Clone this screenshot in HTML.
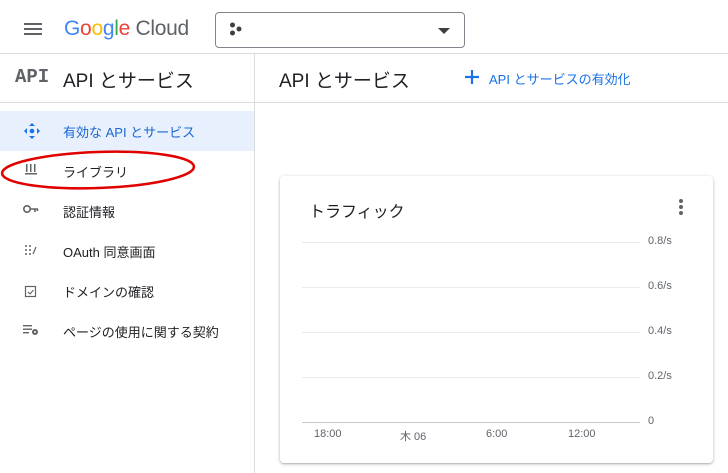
<!DOCTYPE html><html><head><meta charset="utf-8"><style>
*{margin:0;padding:0;box-sizing:border-box}
body{width:728px;height:473px;overflow:hidden;background:#fff;font-family:"Liberation Sans","Noto Sans CJK JP",sans-serif;color:#202124;position:relative}
.a{position:absolute}
.t{white-space:nowrap}
.nav{font-size:13px;color:#202124}
</style></head><body>
<div class="a" style="left:24px;top:23px;width:18px;height:2px;background:#5f6368;box-shadow:0 5px 0 #5f6368,0 10px 0 #5f6368"></div>
<div class="a t" style="left:64px;top:17px;font-size:21px;letter-spacing:-0.3px"><span style="color:#4285f4">G</span><span style="color:#ea4335">o</span><span style="color:#fbbc05">o</span><span style="color:#4285f4">g</span><span style="color:#34a853">l</span><span style="color:#ea4335">e</span> <span style="color:#5f6368">Cloud</span></div>
<div class="a" style="left:215px;top:12px;width:250px;height:36px;border:1px solid #80868b;border-radius:4px"></div>
<svg class="a" style="left:229px;top:22px" width="14" height="14"><circle cx="3.5" cy="3" r="2.5" fill="#3c4043"/><circle cx="10" cy="7" r="2.5" fill="#3c4043"/><circle cx="3.5" cy="11" r="2.5" fill="#3c4043"/></svg>
<div class="a" style="left:438px;top:28px;width:0;height:0;border-left:6px solid transparent;border-right:6px solid transparent;border-top:6px solid #3c4043"></div>
<div class="a" style="left:0;top:53px;width:728px;height:1px;background:#dadce0"></div>
<div class="a" style="left:0;top:102px;width:728px;height:1px;background:#dadce0"></div>
<div class="a" style="left:254px;top:54px;width:1px;height:419px;background:#dadce0"></div>
<div class="a t" style="left:15px;top:66px;font-family:'Liberation Mono',monospace;font-weight:bold;font-size:19px;color:#5f6368">API</div>
<div class="a t" style="left:63px;top:66px;font-size:19px">API とサービス</div>
<div class="a t" style="left:279px;top:66px;font-size:19px">API とサービス</div>
<svg class="a" style="left:464px;top:69px" width="16" height="16"><path d="M8 1v14M1 8h14" stroke="#1a73e8" stroke-width="2.2"/></svg>
<div class="a t" style="left:489px;top:69px;font-size:13px;color:#1a73e8">API とサービスの有効化</div>
<div class="a" style="left:0;top:111px;width:254px;height:40px;background:#e8f0fe"></div>
<svg class="a" style="left:23px;top:122px" width="18" height="18"><g fill="#1a73e8"><path d="M9 1l3 3H6z"/><path d="M9 17l3-3H6z"/><path d="M1 9l3-3v6z"/><path d="M17 9l-3-3v6z"/><circle cx="9" cy="9" r="2.3"/></g></svg>
<div class="a t nav" style="left:63px;top:122px;color:#1967d2">有効な API とサービス</div>
<svg class="a" style="left:24px;top:162px" width="14" height="14"><g fill="#5f6368"><rect x="1" y="11" width="12" height="1.5"/><rect x="2" y="2" width="1.5" height="8"/><rect x="6" y="2" width="1.5" height="8"/><rect x="10" y="2" width="1.5" height="8"/></g></svg>
<div class="a t nav" style="left:63px;top:162px">ライブラリ</div>
<svg class="a" style="left:22px;top:203px" width="18" height="12"><circle cx="5" cy="6" r="3.2" fill="none" stroke="#5f6368" stroke-width="1.6"/><path d="M8 6h8M13 6v3M15.5 6v2" stroke="#5f6368" stroke-width="1.6"/></svg>
<div class="a t nav" style="left:63px;top:202px">認証情報</div>
<svg class="a" style="left:24px;top:244px" width="14" height="12"><g fill="#5f6368"><circle cx="2" cy="2" r="1"/><circle cx="2" cy="6" r="1"/><circle cx="2" cy="10" r="1"/><circle cx="6" cy="2" r="1"/><circle cx="6" cy="6" r="1"/><circle cx="6" cy="10" r="1"/><path d="M9 10l3-7" stroke="#5f6368" stroke-width="1.2"/></g></svg>
<div class="a t nav" style="left:63px;top:242px">OAuth 同意画面</div>
<svg class="a" style="left:24px;top:284px" width="14" height="14"><rect x="1.5" y="2.5" width="10" height="10" fill="none" stroke="#5f6368" stroke-width="1.2"/><path d="M4 8l2 2 3.5-4" fill="none" stroke="#5f6368" stroke-width="1.1"/></svg>
<div class="a t nav" style="left:63px;top:282px">ドメインの確認</div>
<svg class="a" style="left:23px;top:323px" width="18" height="14"><g fill="#5f6368"><rect x="0" y="2" width="9" height="1.4"/><rect x="0" y="5.5" width="9" height="1.4"/><rect x="0" y="9" width="6" height="1.4"/><circle cx="12" cy="9" r="3"/></g><circle cx="12" cy="9" r="1" fill="#fff"/></svg>
<div class="a t nav" style="left:63px;top:322px">ページの使用に関する契約</div>
<svg class="a" style="left:0;top:148px" width="200" height="44"><ellipse cx="98" cy="22" rx="96" ry="18" fill="none" stroke="#e00000" stroke-width="2.5" transform="rotate(-2 98 22)"/></svg>
<div class="a" style="left:280px;top:176px;width:433px;height:287px;border-radius:4px;box-shadow:0 1px 3px rgba(60,64,67,.35),0 1px 1px rgba(60,64,67,.15)"></div>
<div class="a t" style="left:309px;top:198px;font-size:16px">トラフィック</div>
<svg class="a" style="left:677px;top:198px" width="8" height="18"><g fill="#5f6368"><circle cx="4" cy="3" r="2"/><circle cx="4" cy="9" r="2"/><circle cx="4" cy="15" r="2"/></g></svg>
<div class="a" style="left:302px;top:242px;width:338px;height:1px;background:#e8eaed"></div>
<div class="a" style="left:302px;top:287px;width:338px;height:1px;background:#e8eaed"></div>
<div class="a" style="left:302px;top:332px;width:338px;height:1px;background:#e8eaed"></div>
<div class="a" style="left:302px;top:377px;width:338px;height:1px;background:#e8eaed"></div>
<div class="a" style="left:302px;top:422px;width:338px;height:1px;background:#c8cacd"></div>
<div class="a t" style="left:648px;top:235px;font-size:11px;color:#5f6368">0.8/s</div>
<div class="a t" style="left:648px;top:280px;font-size:11px;color:#5f6368">0.6/s</div>
<div class="a t" style="left:648px;top:325px;font-size:11px;color:#5f6368">0.4/s</div>
<div class="a t" style="left:648px;top:370px;font-size:11px;color:#5f6368">0.2/s</div>
<div class="a t" style="left:648px;top:415px;font-size:11px;color:#5f6368">0</div>
<div class="a t" style="left:314px;top:428px;font-size:11px;color:#5f6368">18:00</div>
<div class="a t" style="left:400px;top:428px;font-size:11px;color:#5f6368">木 06</div>
<div class="a t" style="left:486px;top:428px;font-size:11px;color:#5f6368">6:00</div>
<div class="a t" style="left:568px;top:428px;font-size:11px;color:#5f6368">12:00</div>
</body></html>
